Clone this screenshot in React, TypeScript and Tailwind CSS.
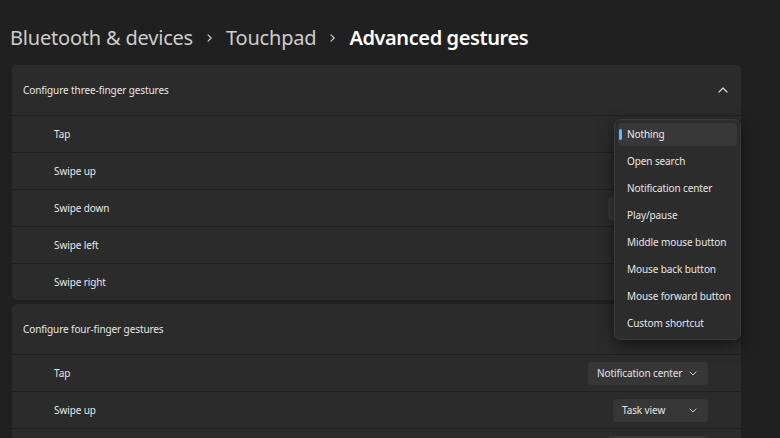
import React from "react";

const font = { fontFamily: '"Noto Sans", "Open Sans", sans-serif' };

function ChevronRight() {
  return (
    <svg width="7" height="10" viewBox="0 0 7 10" className="mx-[13px]">
      <path d="M2 1.8 L5.2 5 L2 8.2" fill="none" stroke="#c8c8c8" strokeWidth="1.2" strokeLinecap="round" strokeLinejoin="round" />
    </svg>
  );
}

function ChevronDown() {
  return (
    <svg width="8" height="5" viewBox="0 0 8 5">
      <path d="M1 1 L4 4 L7 1" fill="none" stroke="#cfcfcf" strokeWidth="1" strokeLinecap="round" strokeLinejoin="round" />
    </svg>
  );
}

function Select({ label, width }: { label: string; width: number }) {
  return (
    <div
      className="h-[23px] rounded-[4px] bg-[#363636] flex items-center justify-between pl-[9px] pr-[11px] text-[10px] tracking-[-0.1px] text-[#e4e4e4] whitespace-nowrap"
      style={{ width }}
    >
      <span>{label}</span>
      <ChevronDown />
    </div>
  );
}

function Row({ label, select }: { label: string; select?: React.ReactNode }) {
  return (
    <div className="h-[37px] border-t border-[#1f1f1f] flex items-center justify-between pl-[42px] pr-[33px]">
      <span className="text-[10px] tracking-[-0.1px] text-[#e6e6e6] whitespace-nowrap">{label}</span>
      {select}
    </div>
  );
}

const menuItems = [
  "Nothing",
  "Open search",
  "Notification center",
  "Play/pause",
  "Middle mouse button",
  "Mouse back button",
  "Mouse forward button",
  "Custom shortcut",
];

export default function App() {
  return (
    <div className="w-[780px] h-[438px] bg-[#202020] overflow-hidden relative" style={font}>
      <div className="flex items-center h-[28px] mt-[24px] mb-[13px] pl-[10px] text-[20px] leading-[28px] tracking-[-0.2px] whitespace-nowrap">
        <span className="text-[#cdcdcd]">Bluetooth &amp; devices</span>
        <ChevronRight />
        <span className="text-[#cdcdcd]">Touchpad</span>
        <ChevronRight />
        <span className="text-white font-semibold tracking-[-0.4px]">Advanced gestures</span>
      </div>

      <div className="ml-[12px] w-[729px] flex flex-col gap-[4px]">
        <div className="rounded-[5px] bg-[#2b2b2b] overflow-hidden">
          <div className="h-[50px] flex items-center justify-between pl-[11px] pr-[13px]">
            <span className="text-[10px] tracking-[-0.1px] text-[#e6e6e6] whitespace-nowrap">Configure three-finger gestures</span>
            <svg width="10" height="6" viewBox="0 0 10 6">
              <path d="M1 5 L5 1 L9 5" fill="none" stroke="#d8d8d8" strokeWidth="1.2" strokeLinecap="round" strokeLinejoin="round" />
            </svg>
          </div>
          <Row label="Tap" />
          <Row label="Swipe up" />
          <Row label="Swipe down" select={<Select label="" width={100} />} />
          <Row label="Swipe left" />
          <Row label="Swipe right" />
        </div>

        <div className="rounded-[5px] bg-[#2b2b2b] overflow-hidden">
          <div className="h-[50px] flex items-center pl-[11px]">
            <span className="text-[10px] tracking-[-0.1px] text-[#e6e6e6] whitespace-nowrap">Configure four-finger gestures</span>
          </div>
          <Row label="Tap" select={<Select label="Notification center" width={120} />} />
          <Row label="Swipe up" select={<Select label="Task view" width={95} />} />
          <Row label="Swipe down" select={<Select label="" width={100} />} />
        </div>
      </div>

      <div className="absolute left-[614px] top-[119px] w-[127px] h-[221px] rounded-[7px] bg-[#2c2c2c] border border-[#3a3a3a] shadow-[0_6px_16px_rgba(0,0,0,0.5)] pt-[3px] px-[3px] flex flex-col gap-[4px]">
        {menuItems.map((item, i) => (
          <div
            key={item}
            className={
              i === 0
                ? "relative h-[23px] shrink-0 rounded-[4px] bg-[#383838] flex items-center pl-[9px] text-[10px] tracking-[-0.1px] text-[#ececec] whitespace-nowrap"
                : "relative h-[23px] shrink-0 rounded-[4px] flex items-center pl-[9px] text-[10px] tracking-[-0.1px] text-[#e6e6e6] whitespace-nowrap"
            }
          >
            {i === 0 && <div className="absolute left-[1px] top-[6px] w-[3px] h-[11px] rounded-full bg-[#4cc2ff]" />}
            {item}
          </div>
        ))}
      </div>
    </div>
  );
}
